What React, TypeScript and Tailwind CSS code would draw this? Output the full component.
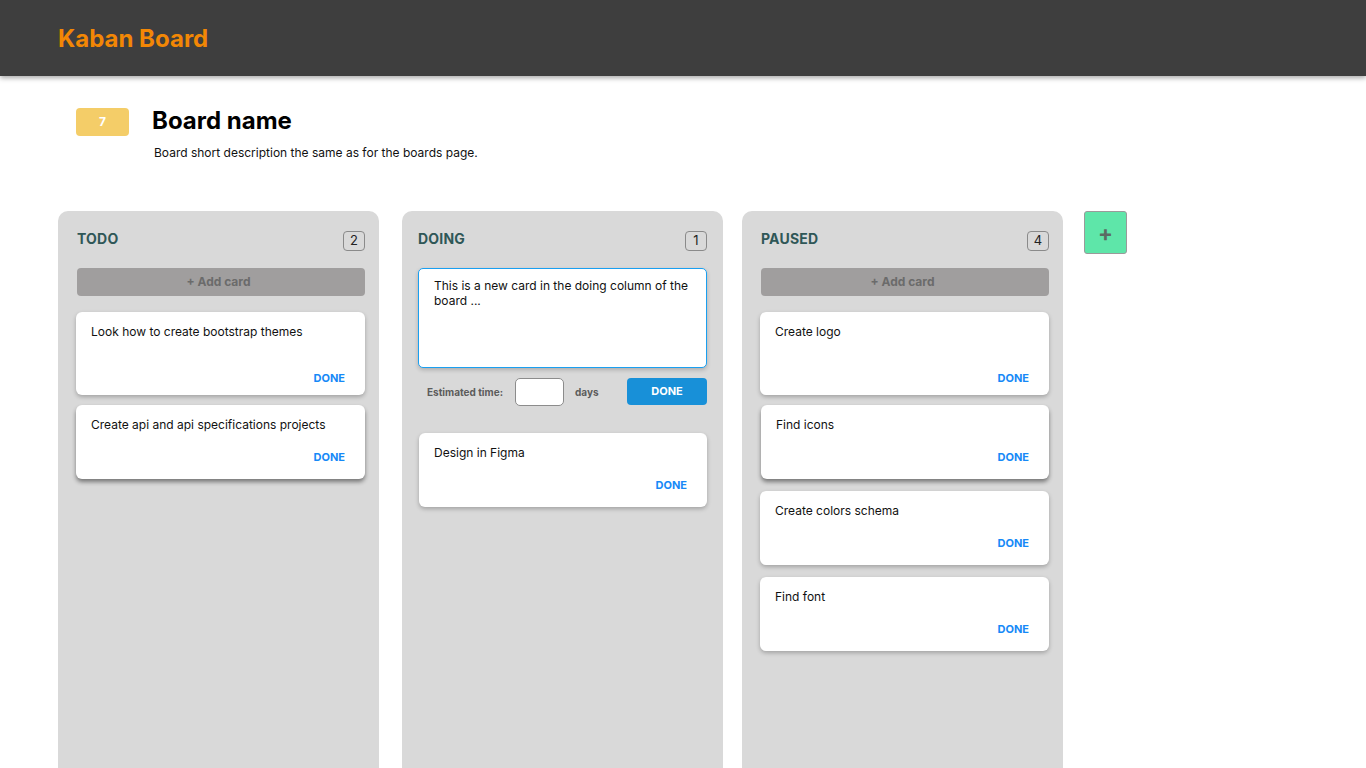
import { useState } from 'react';

type CardData = {
  text: string;
  tall?: boolean;
  lifted?: boolean;
};

const Card = ({ text, tall, lifted }: CardData) => (
  <div
    className={`flex flex-col bg-white rounded-[6px] px-[15px] pt-3 ${
      tall ? 'h-[83px] pb-[10px]' : 'h-[74px] pb-[15px]'
    } ${
      lifted
        ? 'shadow-[0_3px_4px_rgba(0,0,0,0.45)]'
        : 'shadow-[0_2px_4px_rgba(0,0,0,0.25)]'
    }`}
  >
    <p className="text-[12px] leading-4 text-[#111]">{text}</p>
    <button className="mt-auto self-end pr-[5px] text-[11px] leading-[14px] font-bold text-[#1689f7]">
      DONE
    </button>
  </div>
);

const ColumnHeader = ({ title, count }: { title: string; count: number }) => (
  <div className="flex items-start justify-between h-5">
    <h3 className="text-[14px] leading-4 font-bold text-[#2f5757] tracking-[0.2px]">
      {title}
    </h3>
    <span className="flex items-center justify-center w-[22px] h-5 border border-[#8a8a8a] rounded-[4px] text-[13px] text-[#222]">
      {count}
    </span>
  </div>
);

const AddCard = () => (
  <button className="mt-[17px] h-7 w-full rounded-[4px] bg-[#a09e9e] pr-[5px] text-[12px] font-bold text-[#6b6b6b]">
    + Add card
  </button>
);

const todo: CardData[] = [
  { text: 'Look how to create bootstrap themes', tall: true },
  { text: 'Create api and api specifications projects', lifted: true },
];

const paused: CardData[] = [
  { text: 'Create logo', tall: true },
  { text: 'Find icons', lifted: true },
  { text: 'Create colors schema' },
  { text: 'Find font' },
];

export default function App() {
  const [days, setDays] = useState('');

  return (
    <div className="flex flex-col h-screen overflow-hidden bg-white font-['Inter',sans-serif]">
      <header className="relative z-10 flex items-center h-[76px] shrink-0 px-[58px] pt-[2px] bg-[#3e3e3e] shadow-[0_2px_5px_rgba(0,0,0,0.35)]">
        <h1 className="text-[24px] font-bold text-[#f28705]">Kaban Board</h1>
      </header>

      <main className="flex flex-col flex-1 min-h-0 px-[58px] pt-[29px]">
        <section className="flex pl-[18px]">
          <span className="flex items-center justify-center w-[53px] h-7 mt-[3px] rounded-[4px] bg-[#f4cd68] text-[12px] font-bold text-white">
            7
          </span>
          <div className="ml-[23px]">
            <h2 className="text-[24px] leading-8 font-bold text-black">
              Board name
            </h2>
            <p className="mt-2 ml-[2px] text-[12px] leading-4 text-[#111]">
              Board short description the same as for the boards page.
            </p>
          </div>
        </section>

        <div className="flex flex-1 items-stretch mt-[50px]">
          {/* TODO */}
          <div className="w-[321px] rounded-t-[10px] bg-[#d9d9d9] pt-5 pl-[19px] pr-[14px]">
            <ColumnHeader title="TODO" count={2} />
            <AddCard />
            <div className="flex flex-col gap-[10px] mt-4 -ml-px">
              {todo.map((c) => (
                <Card key={c.text} {...c} />
              ))}
            </div>
          </div>

          {/* DOING */}
          <div className="w-[321px] ml-[23px] rounded-t-[10px] bg-[#d9d9d9] pt-5 px-4">
            <ColumnHeader title="DOING" count={1} />
            <div className="mt-[17px] h-[100px] bg-white border border-[#1a9ff0] rounded-[5px] px-[15px] pt-[9px] shadow-[0_2px_4px_rgba(0,0,0,0.2)]">
              <p className="text-[12px] leading-[15px] text-[#111]">
                This is a new card in the doing column of the board ...
              </p>
            </div>
            <div className="flex items-center h-7 mt-[10px] pl-[9px]">
              <span className="text-[10px] font-bold text-[#5c5c5c]">
                Estimated time:
              </span>
              <input
                value={days}
                onChange={(e) => setDays(e.target.value)}
                className="ml-3 w-[49px] h-7 rounded-[5px] border border-[#8c8c8c] bg-white px-1 text-[12px] outline-none"
              />
              <span className="ml-[11px] text-[10px] font-bold text-[#5c5c5c]">
                days
              </span>
              <button className="ml-auto w-20 h-[27px] -mt-px rounded-[4px] bg-[#1890d8] text-[11px] font-bold text-white">
                DONE
              </button>
            </div>
            <div className="mt-[27px] ml-px">
              <Card text="Design in Figma" />
            </div>
          </div>

          {/* PAUSED */}
          <div className="w-[321px] ml-[19px] rounded-t-[10px] bg-[#d9d9d9] pt-5 pl-[19px] pr-[14px]">
            <ColumnHeader title="PAUSED" count={4} />
            <AddCard />
            <div className="flex flex-col mt-4 -ml-px">
              {paused.map((c, i) => (
                <div key={c.text} className={i === 0 ? '' : i === 1 ? 'mt-[10px] ml-px' : 'mt-3'}>
                  <Card {...c} />
                </div>
              ))}
            </div>
          </div>

          <div className="ml-[21px]">
            <button className="flex items-center justify-center w-[43px] h-[43px] rounded-[3px] border border-[#9a9a9a] bg-[#5ee6a9] text-[22px] font-bold leading-none text-[#5b6b63]">
              +
            </button>
          </div>
        </div>
      </main>
    </div>
  );
}
